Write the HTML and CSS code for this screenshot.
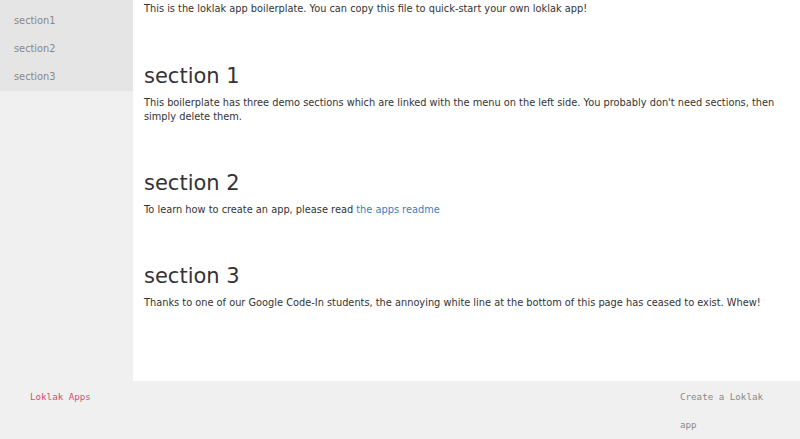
FILE: index.html
```html
<!DOCTYPE html>
<html>
<head>
<meta charset="utf-8">
<link rel="stylesheet" href="styles.css">
</head>
<body>
<div class="page">
  <div class="top">
    <nav class="sidebar">
      <ul class="menu">
        <li><a href="#s1">section1</a></li>
        <li><a href="#s2">section2</a></li>
        <li><a href="#s3">section3</a></li>
      </ul>
    </nav>
    <main class="content">
      <p class="intro">This is the loklak app boilerplate. You can copy this file to quick-start your own loklak app!</p>
      <section class="section" id="s1">
        <h2>section 1</h2>
        <p>This boilerplate has three demo sections which are linked with the menu on the left side. You probably don't need sections, then simply delete them.</p>
      </section>
      <section class="section" id="s2">
        <h2>section 2</h2>
        <p>To learn how to create an app, please read <a href="#">the apps readme</a></p>
      </section>
      <section class="section" id="s3">
        <h2>section 3</h2>
        <p>Thanks to one of our Google Code-In students, the annoying white line at the bottom of this page has ceased to exist. Whew!</p>
      </section>
    </main>
  </div>
  <footer class="footer">
    <div class="brand">Loklak Apps</div>
    <div class="create">Create a Loklak app</div>
  </footer>
</div>
</body>
</html>
```

FILE: styles.css
```css
html, body {
  margin: 0;
  padding: 0;
  height: 100%;
}
body {
  font-family: "DejaVu Sans", sans-serif;
  font-size: 9.8px;
  line-height: 14px;
  color: #333;
  background: #f0f0f0;
}
.page {
  display: flex;
  flex-direction: column;
  height: 439px;
}
.top {
  display: flex;
  flex: 1;
  min-height: 0;
}
.sidebar {
  width: 133px;
  flex: none;
  background: #f0f0f0;
}
.menu {
  list-style: none;
  margin: 0;
  padding: 7px 0 0;
  background: #e5e5e5;
}
.menu li a {
  display: block;
  height: 28px;
  line-height: 28px;
  padding-left: 14px;
  color: #888;
  text-decoration: none;
}
.content {
  flex: 1;
  background: #fff;
  padding: 2px 11px 0 11px;
  overflow: hidden;
}
.content p {
  margin: 0 0 6px;
}
.content .intro {
  margin-bottom: 7px;
}
.section {
  padding-top: 28px;
}
.section h2 {
  font-size: 21px;
  font-weight: normal;
  line-height: 23px;
  margin: 14px 0 8px;
  color: #333;
}
.content a {
  color: #3a80c0;
  text-decoration: none;
}
.footer {
  height: 58px;
  box-sizing: border-box;
  padding-top: 2px;
  flex: none;
  display: flex;
  justify-content: space-between;
  background: #f0f0f0;
  font-family: "DejaVu Sans Mono", monospace;
  font-size: 9.2px;
  line-height: 28px;
}
.brand {
  padding-left: 30px;
  color: #d84c72;
}
.create {
  width: 100px;
  margin-right: 20px;
  color: #888;
}
```
